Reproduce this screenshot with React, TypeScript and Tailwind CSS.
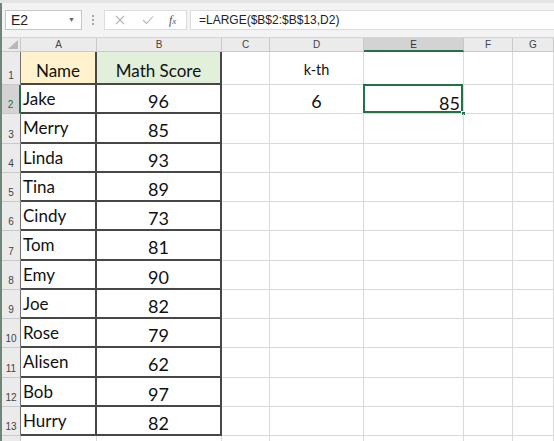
import { Fragment } from 'react'

const rows: [string, number][] = [
  ['Jake', 96],
  ['Merry', 85],
  ['Linda', 93],
  ['Tina', 89],
  ['Cindy', 73],
  ['Tom', 81],
  ['Emy', 90],
  ['Joe', 82],
  ['Rose', 79],
  ['Alisen', 62],
  ['Bob', 97],
  ['Hurry', 82]
]

const cols = ['A', 'B', 'C', 'D', 'E', 'F', 'G']

const grid = 'border-r border-b border-[#dadada]'
const dark = 'border-r-2 border-b-2 border-[#474747]'

const FormulaBar = () => (
  <div className="flex items-center h-[35px] bg-[#f3f3f3] border-b border-[#d6d6d6] pl-[3px]">
    <div className="flex items-center justify-between w-[77px] h-[20px] bg-white border border-[#c6c6c6] pl-[5px] pr-[6px] text-[14px] text-[#222]">
      <span>E2</span>
      <span className="text-[7px] text-[#666]">▼</span>
    </div>
    <div className="flex flex-col gap-[2px] mx-[10px]">
      <span className="w-[2px] h-[2px] bg-[#a8a8a8]" />
      <span className="w-[2px] h-[2px] bg-[#a8a8a8]" />
      <span className="w-[2px] h-[2px] bg-[#a8a8a8]" />
    </div>
    <div className="flex items-center h-[20px] w-[83px] bg-white border border-[#dcdcdc] text-[#b8b8b8]">
      <svg width="10" height="10" viewBox="0 0 10 10" className="ml-[10px]">
        <path d="M1 1 L9 9 M9 1 L1 9" stroke="#b5b5b5" strokeWidth="1.1" fill="none" />
      </svg>
      <svg width="12" height="10" viewBox="0 0 12 10" className="ml-[17px]">
        <path d="M1 5 L4.5 8.5 L11 1.5" stroke="#b5b5b5" strokeWidth="1.1" fill="none" />
      </svg>
      <span className="ml-[15px] text-[12px] italic font-['Liberation_Serif',serif] text-[#555]">
        f<span className="text-[9px]">x</span>
      </span>
    </div>
    <div className="flex items-center flex-1 h-[20px] ml-[3px] bg-white border border-r-0 border-[#dcdcdc] pl-[8px] text-[12px] text-[#222]">
      =LARGE($B$2:$B$13,D2)
    </div>
  </div>
)

const Sheet = () => (
  <div className="grid flex-1 grid-cols-[19px_76px_125px_48px_94px_100px_49px_1fr] grid-rows-[14px_33px_repeat(12,29.25px)_1fr] font-['Lato','Carlito',sans-serif] text-[#111]">
    <div className="relative bg-[#ebebeb] border-r border-b border-[#c9c9c9]">
      <svg width="10" height="9" viewBox="0 0 10 9" className="absolute right-[2px] bottom-[2px]">
        <path d="M10 0 L10 9 L0 9 Z" fill="#b8b8b8" />
      </svg>
    </div>
    {cols.map((c) => (
      <div
        key={c}
        className={
          c === 'E'
            ? 'flex items-center justify-center bg-[#d3d3d3] border-r border-[#c9c9c9] border-b-2 border-b-[#217346] text-[10px] text-[#333] font-["Liberation_Sans",sans-serif]'
            : 'flex items-center justify-center bg-[#ebebeb] border-r border-b border-[#c9c9c9] text-[10px] text-[#444] font-["Liberation_Sans",sans-serif]'
        }
      >
        {c}
      </div>
    ))}

    <div className="flex items-end justify-center pb-[1px] bg-[#ebebeb] border-r border-r-[#707070] border-b border-b-[#c9c9c9] text-[10px] text-[#444] font-['Liberation_Sans',sans-serif]">
      1
    </div>
    <div className={`flex justify-center pt-[6px] bg-[#fff2cc] text-[17px] ${dark}`}>Name</div>
    <div className={`flex justify-center pt-[6px] bg-[#e2efda] text-[17px] ${dark}`}>Math Score</div>
    <div className={grid} />
    <div className={`flex justify-center pt-[7px] text-[14.5px] ${grid}`}>k-th</div>
    <div className={grid} />
    <div className={grid} />
    <div className={grid} />

    {rows.map(([name, score], i) => {
      const r = i + 2
      const sel = r === 2
      return (
        <Fragment key={name}>
          <div
            className={
              sel
                ? 'flex items-end justify-center pb-[1px] bg-[#d3d3d3] border-r-2 border-r-[#217346] border-b border-b-[#c9c9c9] text-[10px] text-[#217346] font-["Liberation_Sans",sans-serif]'
                : 'flex items-end justify-center pb-[1px] bg-[#ebebeb] border-r border-r-[#707070] border-b border-b-[#c9c9c9] text-[10px] text-[#444] font-["Liberation_Sans",sans-serif]'
            }
          >
            {r}
          </div>
          <div className={`pl-[2px] pt-[1px] text-[17px] ${dark}`}>{name}</div>
          <div className={`flex justify-center pt-[3px] text-[18px] ${dark}`}>{score}</div>
          <div className={grid} />
          <div className={`flex justify-center pt-[3px] text-[18px] ${grid}`}>{sel ? '6' : ''}</div>
          <div className={`relative flex justify-end pt-[5px] pr-[3px] text-[18px] ${grid}`}>
            {sel && (
              <>
                <span>85</span>
                <span className="absolute -left-px -top-px -right-0 -bottom-0 border-2 border-[#217346]" />
                <span className="absolute -right-[3px] -bottom-[3px] w-[5px] h-[5px] bg-[#217346] border border-white" />
              </>
            )}
          </div>
          <div className={grid} />
          <div className={grid} />
        </Fragment>
      )
    })}

    <div className="bg-[#ebebeb] border-r border-[#c9c9c9]" />
    {cols.map((c) => (
      <div key={'l' + c} className="border-r border-[#dadada]" />
    ))}
  </div>
)

export default function App() {
  return (
    <div className="w-[554px] h-[441px] overflow-hidden bg-white flex flex-col font-['Liberation_Sans',sans-serif]">
      <div className="h-[3px] bg-[#e4e4e4]" />
      <div className="flex flex-1">
        <div className="w-[2px] bg-[#6f8577]" />
        <div className="flex flex-col flex-1">
          <FormulaBar />
          <Sheet />
        </div>
      </div>
    </div>
  )
}
